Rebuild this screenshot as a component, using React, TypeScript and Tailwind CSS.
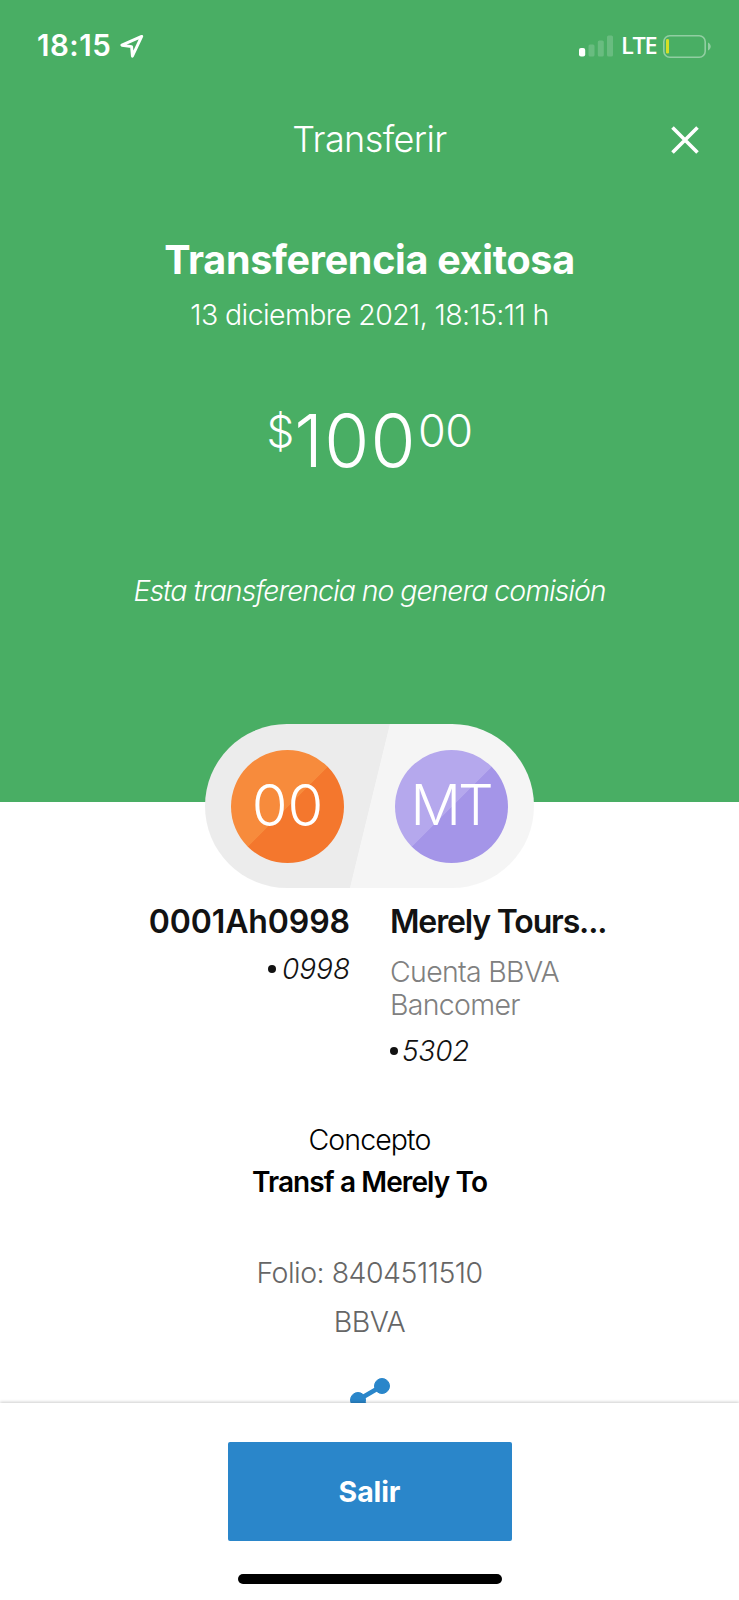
import React from "react";

function StatusBar() {
  return (
    <div className="flex h-[92px] items-center justify-between pr-[28px] pl-[37px]">
      <div className="flex items-center gap-[9px]">
        <span className="w-[74px] text-[29.500px] leading-none font-semibold tracking-[0.5px]">18:15</span>
        <svg className="size-[25px]" viewBox="0 0 25 25" fill="none" stroke="currentColor" strokeWidth="2.9" strokeLinejoin="round">
          <path d="M21.7 2.4 1.900 11.2 11.6 12.6 12.4 22.2Z" />
        </svg>
      </div>
      <div className="flex items-center">
        <svg className="h-[22px] w-[35px]" viewBox="0 0 35 22" fill="currentColor">
          <rect x="0" y="13" width="6.2" height="8.500" rx="2" />
          <rect x="9.5" y="9.500" width="6" height="12" rx="1.5" opacity=".18" />
          <rect x="18.8" y="5.500" width="6" height="16" rx="1.5" opacity=".18" />
          <rect x="28" y=".5" width="6" height="21" rx="1.5" opacity=".18" />
        </svg>
        <span className="ml-[7px] w-[36px] font-['Open_Sans'] text-[23.500px] leading-none font-semibold tracking-[-1.300px]">LTE</span>
        <svg className="ml-[6px] h-[23px] w-[48px]" viewBox="0 0 48 23" fill="none">
          <rect x=".8" y=".8" width="41.4" height="21.4" rx="6" stroke="#fff" strokeOpacity=".4" strokeWidth="1.6" />
          <rect x="3" y="4" width="3" height="14.5" rx="1.3" fill="#d3df25" />
          <path d="M45 7.5c3.6 1.6 3.6 6.400 0 8Z" fill="#fff" fillOpacity=".4" />
        </svg>
      </div>
    </div>
  );
}

function Avatar({ initials, className }: { initials: string; className: string }) {
  return (
    <div className={"flex size-[113px] items-center justify-center rounded-full pb-[2px] leading-none font-light text-white " + className}>
      {initials}
    </div>
  );
}

function Dot() {
  return <span className="size-[8px] rounded-full bg-[#121212]" />;
}

export default function App() {
  return (
    <div className="flex h-[1600px] w-[739px] flex-col overflow-hidden bg-white font-['Inter','Noto_Sans',sans-serif] text-[#121212]">
      <header className="flex h-[802px] shrink-0 flex-col bg-[#49ae64] text-white">
        <StatusBar />
        <div className="grid h-[94px] grid-cols-[1fr_auto_1fr] items-center">
          <span />
          <h1 className="text-[36px] leading-[94px] font-light tracking-[-0.600px]">Transferir</h1>
          <svg className="mt-[2px] mr-[40px] size-[28px] justify-self-end" viewBox="0 0 28 28" stroke="currentColor" strokeWidth="3.6">
            <path d="M1.500 1.500 26.500 26.500M26.500 1.500 1.500 26.500" />
          </svg>
        </div>
        <div className="flex flex-col items-center pt-[48px]">
          <h2 className="text-[39.500px] leading-[52px] font-bold tracking-[-0.300px]">Transferencia exitosa</h2>
          <p className="mt-[4px] text-[28.500px] leading-[50px] font-light tracking-[-0.600px]">13 diciembre 2021, 18:15:11 h</p>
          <div className="mt-[58px] flex h-[81px] items-start font-light">
            <span className="text-[44px] leading-[66px]">$</span>
            <span className="mr-[1px] text-[73px] leading-[86px] tracking-[1.300px]">100</span>
            <span className="text-[45px] leading-[66px] tracking-[-0.500px]">00</span>
          </div>
          <p className="mt-[87px] text-[28.500px] leading-[50px] font-light tracking-[-1.040px] italic">Esta transferencia no genera comisión</p>
        </div>
      </header>

      <div className="-mt-[78px] flex h-[164px] w-[329px] shrink-0 items-center justify-between self-center rounded-full bg-[linear-gradient(103.7deg,#ececec_50%,#f5f5f5_50.200%)] px-[26px]">
        <Avatar initials="00" className="bg-[linear-gradient(135deg,#f78b3c_50%,#f4772d_50.500%)] text-[58px]" />
        <Avatar initials="MT" className="bg-[linear-gradient(135deg,#b5a8ed_50%,#a495e8_50.500%)] pr-[2px] text-[56px] tracking-[-3px]" />
      </div>

      <div className="mt-[13px] grid h-[199px] grid-cols-[350px_1fr] gap-x-[40px]">
        <div className="flex flex-col items-end">
          <p className="text-[32px] leading-[42px] font-semibold tracking-[-0.100px]">0001Ah0998</p>
          <p className="mt-[6px] flex items-center gap-[6px] text-[28px] leading-[40px] font-light italic"><Dot />0998</p>
        </div>
        <div className="flex flex-col items-start">
          <p className="text-[32px] leading-[42px] font-semibold tracking-[-1.150px]">Merely Tours...</p>
          <p className="mt-[12px] text-[28.5px] leading-[33px] font-light tracking-[-0.700px] text-[#808080]">Cuenta BBVA<br />Bancomer</p>
          <p className="mt-[10px] flex items-center gap-[4px] text-[28px] leading-[40px] font-light tracking-[-0.200px] italic"><Dot />5302</p>
        </div>
      </div>

      <div className="flex flex-col items-center pt-[19px]">
        <p className="text-[28.5px] leading-[42px] font-light tracking-[-0.900px] text-black">Concepto</p>
        <p className="mt-[1px] text-[28px] leading-[41px] font-semibold tracking-[-0.900px] text-black">Transf a Merely To</p>
        <p className="mt-[47px] text-[28.5px] leading-[46px] font-light tracking-[-0.500px] text-[#666]">Folio: 8404511510</p>
        <p className="mt-[3px] text-[28.5px] leading-[46px] font-light tracking-[-0.500px] text-[#666]">BBVA</p>
      </div>

      <div className="flex min-h-0 flex-1 justify-center overflow-hidden pt-[33px]">
        <svg className="h-[48px] w-[40px] shrink-0" viewBox="0 0 40 48" fill="#2a86ca" stroke="#2a86ca">
          <path d="M32 8 8 22 32 38" fill="none" strokeWidth="4.500" />
          <circle cx="32" cy="8" r="7.500" />
          <circle cx="8" cy="22" r="7.500" />
          <circle cx="32" cy="38" r="7.500" />
        </svg>
      </div>

      <footer className="z-10 flex h-[197px] shrink-0 flex-col items-center bg-white pt-[39px] shadow-[0_-1px_3px_rgba(0,0,0,0.2)]">
        <button className="h-[99px] w-[284px] rounded-[2px] bg-[#2a86ca] pt-[2px] text-[28.5px] leading-none font-bold tracking-[-0.100px] text-white">Salir</button>
        <div className="mt-[33px] h-[10px] w-[264px] rounded-full bg-black" />
      </footer>
    </div>
  );
}
